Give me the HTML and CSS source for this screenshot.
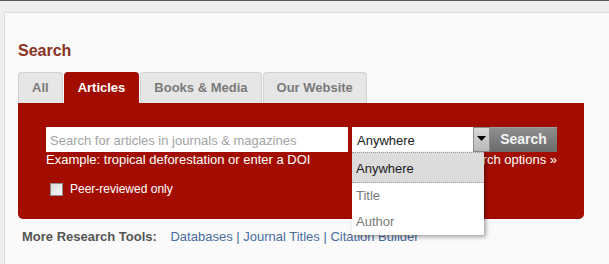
FILE: index.html
```html
<!DOCTYPE html>
<html>
<head>
<meta charset="utf-8">
<link rel="stylesheet" href="styles.css">
</head>
<body>
<div class="panel">
  <h2 class="heading">Search</h2>
  <div class="tabs">
    <span class="tab">All</span>
    <span class="tab active">Articles</span>
    <span class="tab">Books &amp; Media</span>
    <span class="tab">Our Website</span>
  </div>
  <div class="box">
    <div class="row">
      <div class="input">Search for articles in journals &amp; magazines</div>
      <div class="select-wrap">
        <div class="select">Anywhere</div>
        <div class="arrow"><svg width="9" height="5" viewBox="0 0 9 5"><path d="M0 0h9L4.5 5z" fill="#000"/></svg></div>
        <div class="menu">
          <div class="opt sel">Anywhere</div>
          <div class="opt">Title</div>
          <div class="opt">Author</div>
        </div>
      </div>
      <div class="btn">Search</div>
    </div>
    <div class="row2">
      <span>Example: tropical deforestation or enter a DOI</span>
      <span>Advanced search options »</span>
    </div>
    <label class="check"><span class="cb"></span>Peer-reviewed only</label>
  </div>
  <div class="more">
    <b>More Research Tools:</b>
    <span class="links">Databases | Journal Titles | Citation Builder</span>
  </div>
</div>
</body>
</html>
```
FILE: styles.css
```css
html, body { height: 100%; }
body {
  margin: 0;
  padding-left: 4px;
  background: #efefef;
  border-top: 1px solid #5a5a5a;
  font-family: "Liberation Sans", Arial, sans-serif;
  overflow: hidden;
  box-sizing: border-box;
}
.panel {
  margin-top: 11px;
  border: 1px solid #dcdcdc;
  border-right: none;
  background: #fafafa;
  padding: 28px 0 30px 13px;
}
.heading {
  margin: 0 0 11px;
  font-size: 16px;
  line-height: 20px;
  color: #8a3324;
  font-weight: bold;
}
.tabs { display: flex; gap: 1px; height: 31px; }
.tab {
  box-sizing: border-box;
  height: 31px;
  padding: 0 13px;
  border: 1px solid #d2d2d2;
  border-bottom: none;
  border-radius: 4px 4px 0 0;
  background: #e6e6e6;
  color: #7a7a7a;
  font-size: 13px;
  font-weight: bold;
  line-height: 30px;
}
.tab.active { background: #a30d00; border-color: #a30d00; color: #fff; }
.box {
  width: 566px;
  height: 116px;
  box-sizing: border-box;
  background: #a30d00;
  border-radius: 0 0 5px 5px;
  padding: 24px 0 0 28px;
  color: #fff;
}
.row { display: flex; height: 25px; width: 511px; }
.input {
  width: 302px;
  height: 25px;
  background: #fff;
  color: #a3a3a3;
  font-size: 13px;
  line-height: 25px;
  padding: 1px 0 0 4px;
  box-sizing: border-box;
  margin-right: 4px;
}
.select-wrap { position: relative; display: flex; }
.select {
  width: 121px;
  height: 25px;
  box-sizing: border-box;
  background: #fff;
  color: #1a1a1a;
  font-size: 13px;
  line-height: 25px;
  padding: 1px 0 0 5px;
}
.arrow {
  width: 17px;
  height: 25px;
  box-sizing: border-box;
  border: 1px solid #8a8a8a;
  background: linear-gradient(#d9d9d9, #b9b9b9);
  display: flex;
  justify-content: center;
  padding-top: 8px;
}
.arrow svg { display: block; }
.menu {
  position: absolute;
  left: 0;
  top: 25px;
  width: 132px;
  background: #fff;
  box-shadow: 2px 2px 4px rgba(0,0,0,0.35);
  z-index: 2;
}
.opt {
  font-size: 13px;
  line-height: 26px;
  padding-left: 4px;
  color: #7a7a7a;
}
.opt.sel {
  background: #dcdcdc;
  color: #1a1a1a;
  border-top: 1px dotted #9a9a9a;
  border-bottom: 1px dotted #9a9a9a;
  padding-top: 3px;
}
.btn {
  width: 67px;
  height: 25px;
  box-sizing: border-box;
  background: linear-gradient(#8e8e8e, #6a6a6a);
  border-top: 1px solid #a0a0a0;
  color: #f4f4f4;
  font-size: 14px;
  font-weight: bold;
  text-align: center;
  line-height: 23px;
}
.row2 {
  display: flex;
  justify-content: space-between;
  width: 511px;
  font-size: 13px;
  line-height: 16px;
}
.check {
  display: flex;
  align-items: center;
  margin: 14px 0 0 4px;
  font-size: 12px;
  line-height: 14px;
}
.cb {
  width: 13px;
  height: 13px;
  box-sizing: border-box;
  border: 1px solid #8f8f8f;
  background: linear-gradient(135deg, #dcdcdc, #fafafa);
  margin-right: 7px;
}
.more {
  margin: 10px 0 0 4px;
  font-size: 13px;
  line-height: 16px;
  color: #555;
}
.more b { margin-right: 10px; }
.links { color: #4a6c9f; }
```
